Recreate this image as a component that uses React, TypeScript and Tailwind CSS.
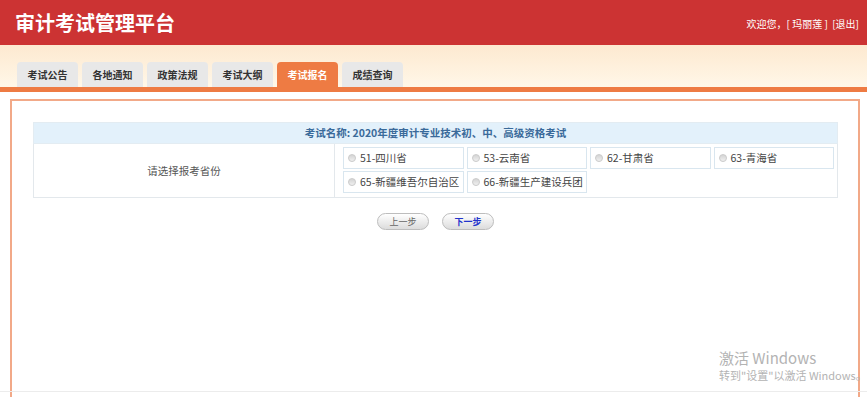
import React from 'react';

const tabs = ['考试公告', '各地通知', '政策法规', '考试大纲', '考试报名', '成绩查询'];
const provinces = ['51-四川省', '53-云南省', '62-甘肃省', '63-青海省', '65-新疆维吾尔自治区', '66-新疆生产建设兵团'];

export default function App() {
    return (
        <div
            className="w-[867px] h-[397px] overflow-hidden bg-white relative"
            style={{ fontFamily: '"Microsoft YaHei", "Noto Sans CJK SC", "Noto Sans", sans-serif' }}
        >
            {/* Header */}
            <div className="h-[45px] bg-[#cc3333] flex items-center justify-between pl-[15px] pr-[8px]">
                <h1 className="text-[20px] font-bold text-white leading-none">审计考试管理平台</h1>
                <div className="text-[10px] text-white leading-none pt-[2px] whitespace-pre">
                    欢迎您，[ 玛丽莲 ]  [退出]
                </div>
            </div>

            {/* Tabs band */}
            <div className="h-[42px] bg-gradient-to-b from-[#fde9d0] to-[#fff7e8] flex items-end pl-[17px] gap-[4px]">
                {tabs.map((t, i) => (
                    <div
                        key={t}
                        className={
                            i === 4
                                ? 'w-[61px] h-[25px] rounded-t-[4px] bg-[#ee7b43] text-white text-[10px] font-bold flex items-center justify-center'
                                : 'w-[61px] h-[25px] rounded-t-[4px] bg-[#e8e8e8] text-[#333] text-[10px] font-bold flex items-center justify-center'
                        }
                    >
                        {t}
                    </div>
                ))}
            </div>
            <div className="h-[5px] bg-[#ee7b43]" />

            {/* Content */}
            <div className="mt-[7px] ml-[10px] w-[850px] h-[300px] border-2 border-b-0 border-[#f2a988] pt-[21px] pl-[21px]">
                <table className="w-[805px] border-collapse text-[10px]">
                    <tbody>
                        <tr>
                            <td
                                colSpan={2}
                                className="h-[21px] bg-[#e3f1fb] text-center font-bold text-[10.5px] text-[#3a6a9a] border border-[#e3ecf2]"
                            >
                                考试名称: 2020年度审计专业技术初、中、高级资格考试
                            </td>
                        </tr>
                        <tr>
                            <td className="w-[301px] text-center text-[#555] text-[10.5px] border border-[#e3e8ec]">请选择报考省份</td>
                            <td className="border border-[#e3e8ec] pt-[3px] pb-[4px] pl-[8px] pr-[3px]">
                                <div className="grid grid-cols-4 gap-x-[3px] gap-y-[2px]">
                                    {provinces.map((p) => (
                                        <label
                                            key={p}
                                            className="h-[22px] border border-[#d9e6ef] flex items-center pl-[4px] gap-[4px] text-[#444] text-[10.5px] whitespace-nowrap"
                                        >
                                            <span className="w-[8px] h-[8px] rounded-full bg-gradient-to-b from-[#d4d4d4] to-[#f0f0f0] border border-[#cccccc]" />
                                            {p}
                                        </label>
                                    ))}
                                </div>
                            </td>
                        </tr>
                    </tbody>
                </table>

                <div className="w-[805px] flex justify-center gap-[13px] mt-[15px]">
                    <button className="w-[52px] h-[17px] rounded-full border border-[#bdbdbd] bg-gradient-to-b from-[#ffffff] to-[#dcdcdc] text-[9px] text-[#666] leading-none">
                        上一步
                    </button>
                    <button className="w-[52px] h-[17px] rounded-full border border-[#bdbdbd] bg-gradient-to-b from-[#ffffff] to-[#dcdcdc] text-[9px] font-bold text-[#2233cc] leading-none">
                        下一步
                    </button>
                </div>
            </div>

            {/* Windows watermark */}
            <div className="absolute left-[719px] top-[350px] text-[#b3b3b3] leading-none">
                <div className="text-[15px]">激活 Windows</div>
                <div className="text-[11px] mt-[5px] whitespace-nowrap">转到"设置"以激活 Windows。</div>
            </div>
            <div className="absolute left-0 right-0 top-[391px] h-px bg-[#ececec]" />
        </div>
    );
}
